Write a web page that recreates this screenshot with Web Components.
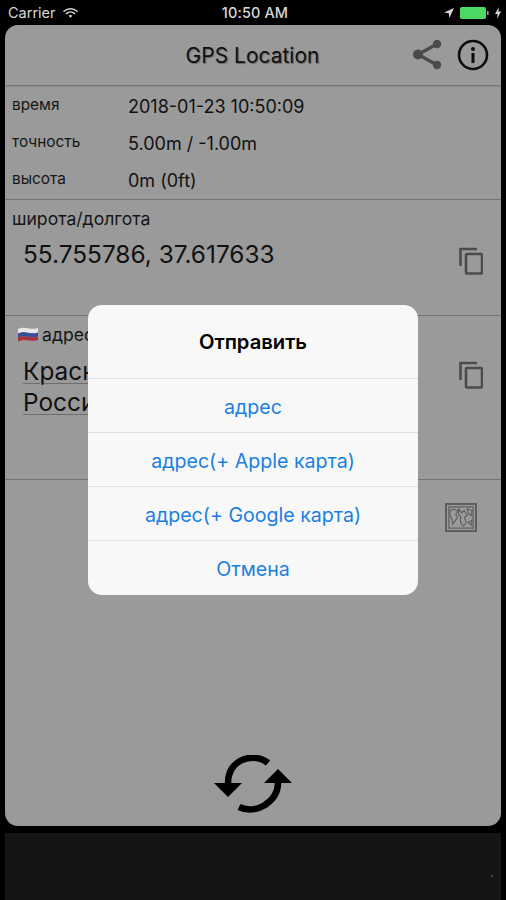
<!DOCTYPE html>
<html lang="ru">
<head>
<meta charset="utf-8">
<title>GPS Location</title>
<style>
html, body {
    background: #000;
    height: 100%;
    margin: 0;
    overflow: hidden;
}
body {
    font-family: "Inter", "Liberation Sans", sans-serif;
}
</style>
</head>
<body>

<gps-screen>
    <gps-status slot="status"></gps-status>
    <gps-header slot="card">GPS Location</gps-header>
    <gps-section slot="card" size="114">
        <gps-row label="время">2018-01-23 10:50:09</gps-row>
        <gps-row label="точность">5.00m / -1.00m</gps-row>
        <gps-row label="высота">0m (0ft)</gps-row>
    </gps-section>
    <gps-section slot="card" size="116">
        <gps-value label="широта/долгота" icon="copy">55.755786, 37.617633</gps-value>
    </gps-section>
    <gps-section slot="card" size="164">
        <gps-value label="адрес" icon="copy" flag link>Красная площадь<br>Россия</gps-value>
    </gps-section>
    <gps-map slot="card"></gps-map>
    <gps-alert slot="alert" title="Отправить">
        <gps-alert-button>адрес</gps-alert-button>
        <gps-alert-button>адрес(+ Apple карта)</gps-alert-button>
        <gps-alert-button>адрес(+ Google карта)</gps-alert-button>
        <gps-alert-button>Отмена</gps-alert-button>
    </gps-alert>
</gps-screen>

<script>
// screen: status bar, dimmed card, dark ad strip, alert on top
let gpsScreen = document.createElement('template');
gpsScreen.innerHTML = `
<style>
:host {
    background: #000;
    display: flex;
    flex-direction: column;
    height: 900px;
    position: relative;
    width: 506px;
}
.card {
    background: #9a9a9a;
    border-radius: 13px;
    display: flex;
    flex-direction: column;
    height: 801px;
    margin: 0 5px;
    overflow: hidden;
}
.strip {
    background: #151515;
    flex: 1;
    margin: 7px 5px 0;
    position: relative;
}
.dot {
    background: #454545;
    height: 2px;
    position: absolute;
    right: 8px;
    top: 42px;
    width: 2px;
}
</style>
<slot name="status"></slot>
<div class="card"><slot name="card"></slot></div>
<div class="strip"><div class="dot"></div></div>
<slot name="alert"></slot>
`;

let gpsStatus = document.createElement('template');
gpsStatus.innerHTML = `
<style>
:host {
    align-items: center;
    color: #d6d6d6;
    display: flex;
    font-size: 14.500px;
    height: 25px;
    position: relative;
}
.left {
    align-items: center;
    display: flex;
    gap: 7px;
    margin-left: 8px;
}
.time {
    font-weight: 500;
    left: 4px;
    letter-spacing: .1px;
    position: absolute;
    right: 0;
    text-align: center;
    top: 4px;
}
.right {
    align-items: center;
    display: flex;
    gap: 6px;
    margin-left: auto;
    margin-right: 5px;
}
svg {
    display: block;
}
</style>
<div class="left">
    <span>Carrier</span>
    <svg width="15" height="12" viewBox="0 0 16 12" fill="none" stroke="#d6d6d6" stroke-width="1.6" stroke-linecap="round">
        <path d="M1 4.2C5 .6 11 .6 15 4.2"/>
        <path d="M3.6 6.6C6.1 4.4 9.9 4.4 12.4 6.6"/>
        <path d="M8 11 6 8.9C7.2 7.9 8.8 7.9 10 8.9Z" fill="#d6d6d6" stroke="none"/>
    </svg>
</div>
<span class="time">10:50 AM</span>
<div class="right">
    <svg width="10" height="10" viewBox="0 0 10 10"><path d="M10 0 0 4.6 4.8 5.2 5.4 10Z" fill="#d6d6d6"/></svg>
    <svg width="29" height="12" viewBox="0 0 29 12">
        <rect x="0" y="0" width="26" height="12" rx="2" fill="#4cd964"/>
        <rect x="27" y="4" width="1.6" height="4" fill="#a0a0a0"/>
    </svg>
    <svg width="6" height="12" viewBox="0 0 6 12"><path d="M4 0 0 7H2.6L2 12 6 4.6H3.4Z" fill="#d6d6d6"/></svg>
</div>
`;

let gpsHeader = document.createElement('template');
gpsHeader.innerHTML = `
<style>
:host {
    align-items: center;
    border-bottom: 1px solid #787878;
    box-shadow: 0 1px 0 #8c8c8c;
    color: #111;
    display: flex;
    flex: none;
    font-size: 21px;
    height: 60px;
    position: relative;
    text-shadow: 1px 1px 1px #666;
}
.title {
    flex: 1;
    margin-left: -1px;
    text-align: center;
}
.share {
    left: 407px;
    position: absolute;
    top: 15px;
}
.info {
    left: 452px;
    position: absolute;
    top: 14px;
}
</style>
<div class="title"><slot></slot></div>
<svg class="share" width="32" height="32" viewBox="0 0 32 32" fill="#4a4a4a" stroke="#4a4a4a">
    <path d="M25 4 6 14.5 25 25" fill="none" stroke-width="3.2"/>
    <circle cx="25" cy="4" r="4.2" stroke="none"/>
    <circle cx="6" cy="14.5" r="5" stroke="none"/>
    <circle cx="25" cy="25" r="4.2" stroke="none"/>
</svg>
<svg class="info" width="32" height="32" viewBox="0 0 32 32" fill="none">
    <circle cx="16" cy="16" r="14" stroke="#0c0c0c" stroke-width="2.6"/>
    <circle cx="16" cy="10" r="2" fill="#0c0c0c"/>
    <rect x="14.5" y="14" width="3" height="10" fill="#0c0c0c"/>
</svg>
`;

let gpsSection = document.createElement('template');
gpsSection.innerHTML = `
<style>
:host {
    border-bottom: 1px solid #747474;
    box-sizing: border-box;
    display: flex;
    flex: none;
    flex-direction: column;
    padding-top: 1px;
}
</style>
<slot></slot>
`;

let gpsRow = document.createElement('template');
gpsRow.innerHTML = `
<style>
:host {
    align-items: center;
    color: #111;
    display: grid;
    grid-template-columns: 116px 1fr;
    height: 37px;
    padding-left: 7px;
}
.label {
    color: #161616;
    font-size: 15.400px;
    margin-top: -2px;
}
.value {
    font-size: 18px;
    margin-top: 2px;
}
</style>
<span class="label" id="label"></span>
<span class="value"><slot></slot></span>
`;

let gpsValue = document.createElement('template');
gpsValue.innerHTML = `
<style>
:host {
    color: #111;
    display: flex;
    flex-direction: column;
    position: relative;
}
.label {
    align-items: center;
    color: #161616;
    display: flex;
    font-size: 17.600px;
    gap: 4px;
    height: 20px;
    margin: 7px 0 0 7px;
}
.flag {
    display: none;
}
:host([flag]) .flag {
    display: block;
    margin-left: 6px;
}
.value {
    font-size: 24.400px;
    line-height: 31px;
    margin: 11px 0 0 18px;
}
:host([link]) .value {
    margin-top: 12px;
    text-decoration: underline #6e6e6e 1px;
    text-underline-offset: 3px;
}
.copy {
    position: absolute;
    right: 18px;
    top: 46px;
}
:host([flag]) .copy {
    top: 44px;
}
</style>
<div class="label">
    <svg class="flag" width="20" height="15" viewBox="0 0 20 15">
        <path d="M0 2C5 0 8 1 11 1.500 14 2 17 2 20 1V5.500C17 6.500 14 6.500 11 6 8 5.500 5 4.500 0 6.500Z" fill="#e8e8ea"/>
        <path d="M0 6.500C5 4.500 8 5.500 11 6 14 6.500 17 6.500 20 5.500V9.500C17 10.500 14 10.500 11 10 8 9.500 5 8.500 0 10.500Z" fill="#34509a"/>
        <path d="M0 10.500C5 8.500 8 9.500 11 10 14 10.500 17 10.500 20 9.500V13C17 14 14 14 11 13.500 8 13 5 12.500 0 14.500Z" fill="#a8323a"/>
    </svg>
    <span id="label"></span>
</div>
<div class="value"><slot></slot></div>
<svg class="copy" width="24" height="28" viewBox="0 0 24 28" fill="none" stroke="#4c4c4c" stroke-width="2.6">
    <path d="M1.500 19V2H18"/>
    <rect x="7" y="7" width="16" height="19.500" rx="1"/>
</svg>
`;

let gpsMap = document.createElement('template');
gpsMap.innerHTML = `
<style>
:host {
    display: block;
    flex: 1;
    position: relative;
}
.map {
    left: 440px;
    position: absolute;
    top: 23px;
}
.refresh {
    left: 209px;
    position: absolute;
    top: 275px;
}
</style>
<svg class="map" width="32" height="29" viewBox="0 0 33 30" fill="none" stroke="#5c5c5c">
    <rect x="1" y="1" width="31" height="28" stroke-width="2"/>
    <rect x="4" y="4" width="25" height="22" stroke-width="1.200"/>
    <path d="M5 8 9 6 13 8 11 12 13 15 10 19 8 22 7 16 5 13ZM14 6 17 10 20 8 23 13 20 15 22 20 19 24 16 20 16 14 14 12ZM23 6 28 8 27 13 24 11ZM24 20 28 18 27 23Z" stroke-width="1.100"/>
</svg>
<svg class="refresh" width="80" height="60" viewBox="0 0 80 60" fill="none">
    <path d="M54 8C47 2 35 1 26 6 17 11 14 19 14 28" stroke="#000" stroke-width="6.500"/>
    <path d="M25 52C33 56 43 55 51 50 60 44 64 37 64 28" stroke="#000" stroke-width="6.500"/>
    <path d="M0 28H28L14 42Z" fill="#000"/>
    <path d="M50 28H78L64 14Z" fill="#000"/>
</svg>
`;

let gpsAlert = document.createElement('template');
gpsAlert.innerHTML = `
<style>
:host {
    background: #f8f8f8;
    border-radius: 14px;
    display: flex;
    flex-direction: column;
    height: 290px;
    left: 88px;
    overflow: hidden;
    position: absolute;
    top: 305px;
    width: 330px;
}
.title {
    align-items: center;
    color: #000;
    display: flex;
    flex: none;
    font-size: 20.200px;
    font-weight: 600;
    height: 73px;
    justify-content: center;
}
::slotted(:last-child) {
    flex: 1;
}
</style>
<div class="title" id="title"></div>
<slot></slot>
`;

let gpsAlertButton = document.createElement('template');
gpsAlertButton.innerHTML = `
<style>
:host {
    align-items: center;
    border-top: 1px solid #e0e0e0;
    box-sizing: border-box;
    color: #1b7fe2;
    display: flex;
    flex: none;
    font-size: 19.600px;
    height: 54px;
    justify-content: center;
    padding-top: 2px;
}
</style>
<slot></slot>
`;

class GpsElement extends HTMLElement {
   constructor(template) {
      super();

      const shadowRoot = this.attachShadow({mode: 'open'});
      shadowRoot.appendChild(template.content.cloneNode(true));
      this.srPointer = shadowRoot;
   }
   connectedCallback() {
      let label = this.srPointer.getElementById('label');
      if (label) label.textContent = this.getAttribute('label');
      let title = this.srPointer.getElementById('title');
      if (title) title.textContent = this.getAttribute('title');
      if (this.hasAttribute('size')) this.style.height = this.getAttribute('size') + 'px';
   }
}

customElements.define('gps-screen', class extends GpsElement { constructor() { super(gpsScreen); } });
customElements.define('gps-status', class extends GpsElement { constructor() { super(gpsStatus); } });
customElements.define('gps-header', class extends GpsElement { constructor() { super(gpsHeader); } });
customElements.define('gps-section', class extends GpsElement { constructor() { super(gpsSection); } });
customElements.define('gps-row', class extends GpsElement { constructor() { super(gpsRow); } });
customElements.define('gps-value', class extends GpsElement { constructor() { super(gpsValue); } });
customElements.define('gps-map', class extends GpsElement { constructor() { super(gpsMap); } });
customElements.define('gps-alert', class extends GpsElement { constructor() { super(gpsAlert); } });
customElements.define('gps-alert-button', class extends GpsElement { constructor() { super(gpsAlertButton); } });
</script>
</body>
</html>
